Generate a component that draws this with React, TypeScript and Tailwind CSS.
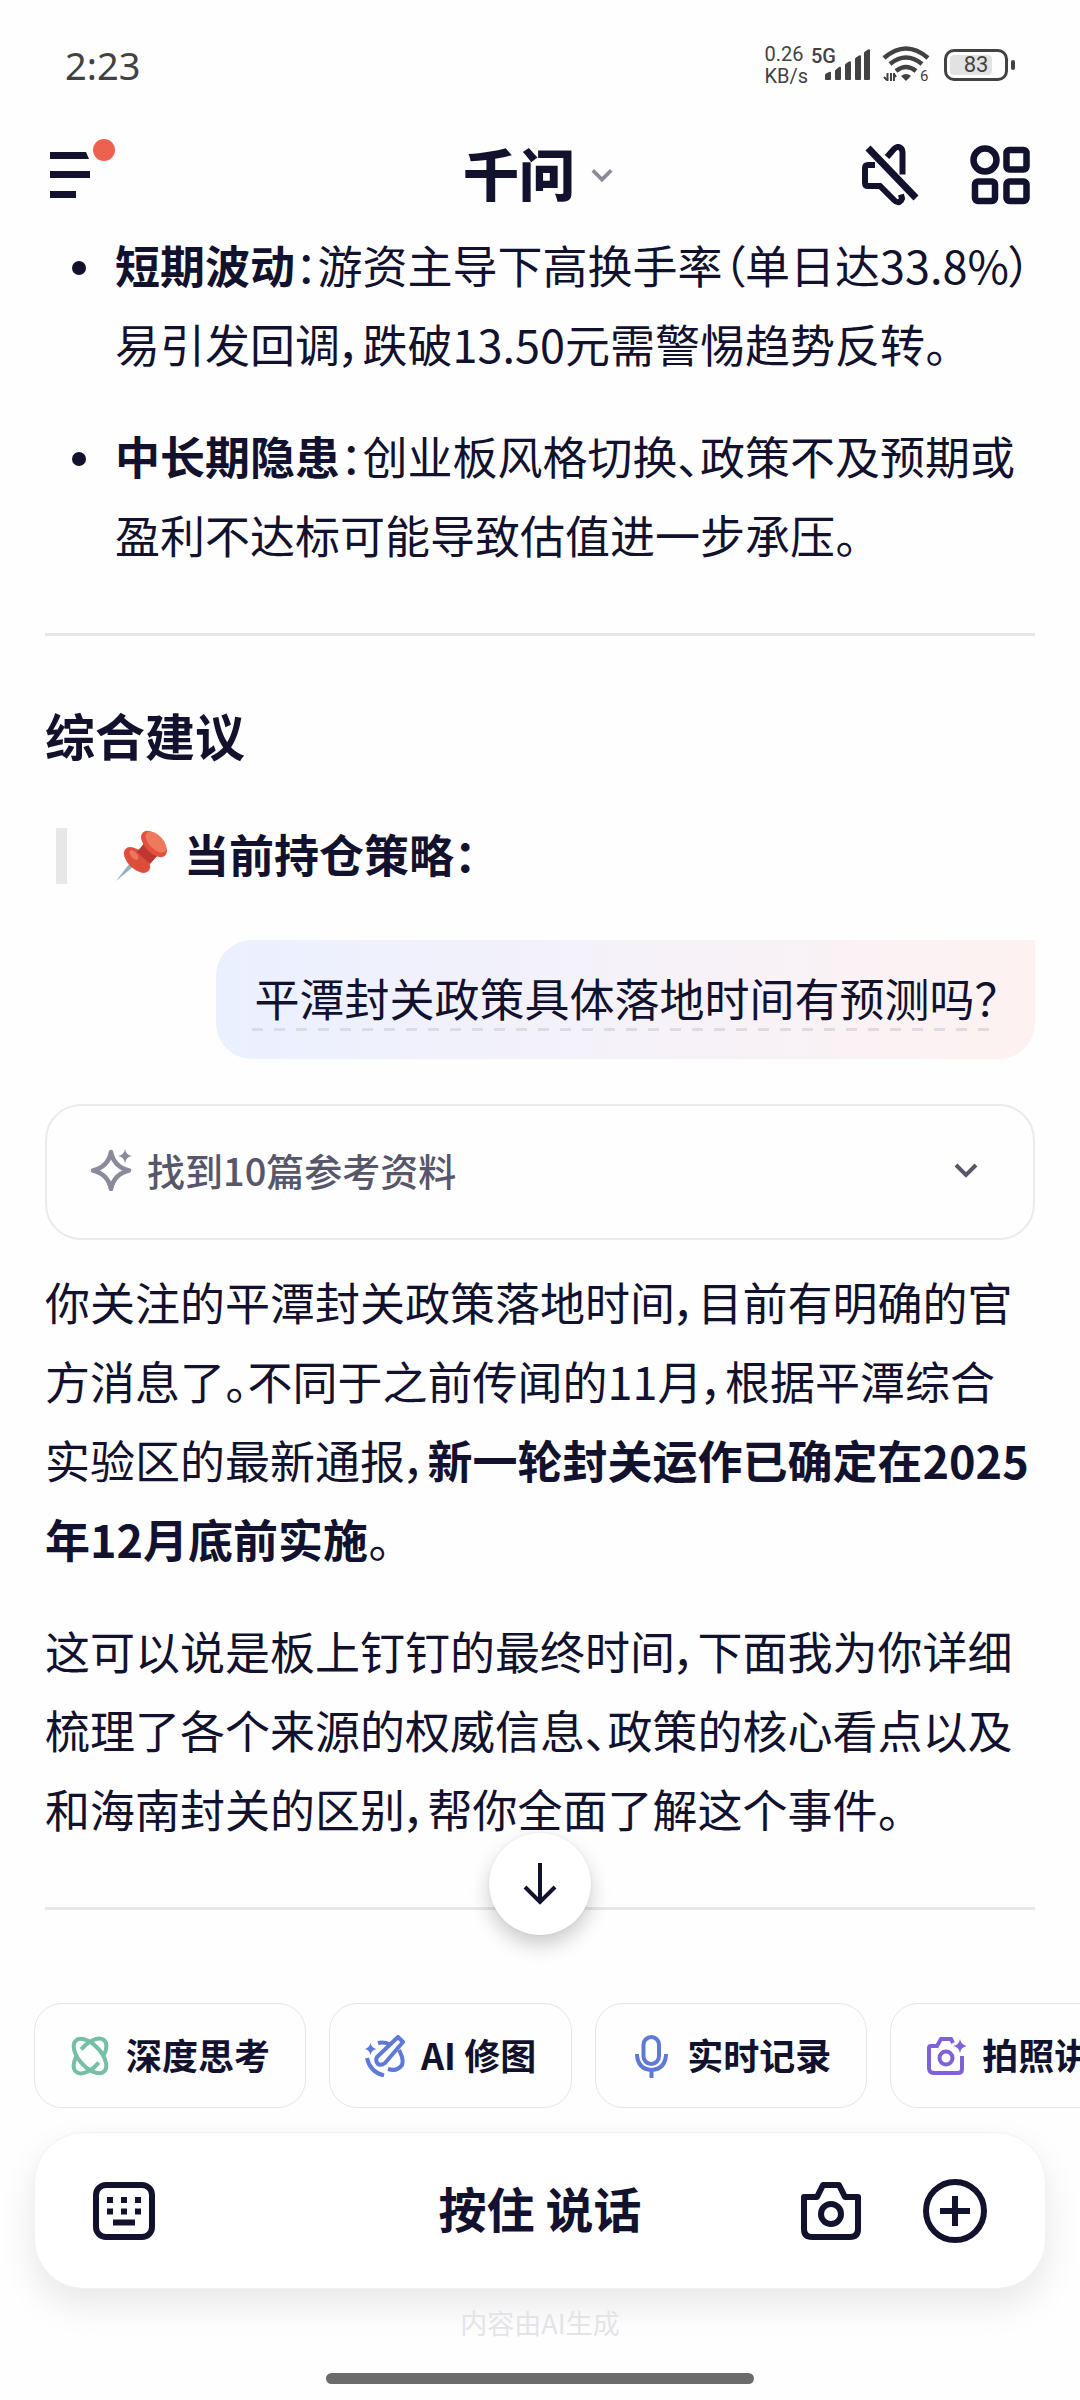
import { ReactNode } from "react";
import clsx from "clsx";

const INK = "#12122e";

const MenuIcon = () => (
  <svg width="66" height="72" viewBox="0 0 66 72" fill={INK}>
    <path d="M0 13h36l3 7H0zM0 32h40v7H0zM0 52h26v7H0z" />
    <circle cx="54" cy="11" r="11" fill="#ec614f" />
  </svg>
);

const MuteIcon = () => (
  <svg width="58" height="62" viewBox="0 0 58 62" fill="none" stroke={INK} strokeWidth="6">
    <path d="M13 21H6Q3 21 3 24v15q0 3 3 3h12l14 14q4 4 7 0.5l1-2-1-4" />
    <path d="M25 13l7-8q3-3 6-1.500 2.500 1.500 2.500 5v22" />
    <path d="M6 4l48 50" strokeWidth="7" />
  </svg>
);

const AppsIcon = () => (
  <svg width="60" height="60" viewBox="0 0 60 60" fill="none" stroke={INK} strokeWidth="6.500">
    <circle cx="15" cy="15" r="11.500" />
    <rect x="36.500" y="5" width="20" height="19.500" rx="3" />
    <rect x="5" y="36.500" width="20" height="19.500" rx="3" />
    <rect x="36.500" y="36.500" width="20" height="19.500" rx="3" />
  </svg>
);

const Chevron = ({ className, width }: { className: string; width: number }) => (
  <svg
    width={width}
    height="16"
    viewBox="0 0 24 16"
    fill="none"
    stroke="currentColor"
    strokeWidth="4"
    className={className}
  >
    <path d="M2 3l10 10L22 3" />
  </svg>
);

const SignalIcon = () => (
  <svg width="46" height="32" viewBox="0 0 46 32" fill="#424242">
    <path d="M1 26q0-1 1-1.500l3-1.500q2-1 2 1v6q0 1-1 1H2q-1 0-1-1zM11 22q0-1 1-1.500l3-2.500q2-1 2 1v11q0 1-1 1h-4q-1 0-1-1zM21 16q0-1 1-1.500l3-2q2-1 2 1v16.500q0 1-1 1h-4q-1 0-1-1zM31 10q0-1 1-1.500l3-2q2-1 2 1V30q0 1-1 1h-4q-1 0-1-1zM40 4q0-1 1-1.500l3-2q2-1 2 1V30q0 1-1 1h-4q-1 0-1-1z" />
  </svg>
);

const WifiIcon = () => (
  <svg width="50" height="42" viewBox="0 -2 50 42" fill="none" stroke="#424242" strokeWidth="4.500">
    <path d="M2 12q22-19 44 0M8 18q16-13 32 0M14 25q10-8 20 0" />
    <path d="M19 30q5-4 10 0l-5 5z" fill="#424242" stroke="none" />
    <path d="M5.500 27v8M9 27v8M12 27v8M2 31l3 3M12 28l2 3" strokeWidth="2" />
    <text x="38" y="35" fill="#424242" stroke="none" fontSize="15" fontFamily="Roboto, sans-serif">
      6
    </text>
  </svg>
);

const PinIcon = () => (
  <svg width="53" height="52" viewBox="0 0 53 52">
    <path d="M1 51l14-18 4 3z" fill="#8fb0bf" />
    <ellipse cx="22" cy="30" rx="16" ry="9" transform="rotate(44 22 30)" fill="#dd4d3c" />
    <path d="M22 22l8-10 14 12-9 10z" fill="#bd3730" />
    <ellipse cx="19" cy="25" rx="6" ry="3" transform="rotate(50 19 25)" fill="#f0755e" />
    <ellipse cx="39" cy="14" rx="16" ry="9" transform="rotate(46 39 14)" fill="#e2503e" />
    <ellipse cx="41" cy="12" rx="13" ry="7" transform="rotate(46 41 12)" fill="#ee7a5d" />
  </svg>
);

const SparkleIcon = () => (
  <svg width="42" height="42" viewBox="0 0 42 42" fill="none" stroke="#8b8a9a" strokeWidth="4.500">
    <path
      d="M20 3q3 15 18 18.500Q23 25 20 40q-3-15-18-18.500Q17 18 20 3z"
      strokeLinejoin="round"
    />
    <path d="M34 0q1 6 7 7-6 1-7 7-1-6-7-7 6-1 7-7z" fill="#8b8a9a" stroke="none" />
  </svg>
);

const AtomIcon = () => (
  <svg width="40" height="40" viewBox="-20 -20 40 40" fill="none" stroke="#74bfa5" strokeWidth="4">
    <ellipse rx="21" ry="11" transform="rotate(48)" />
    <g transform="rotate(-48)">
      <path d="M-1-11A21 11 0 0 1 10 9.700M1 11A21 11 0 0 1-10-9.700" />
    </g>
  </svg>
);

const RetouchIcon = () => (
  <svg width="40" height="42" viewBox="0 0 40 42" fill="none" stroke="#5f79d8" strokeWidth="4">
    <path d="M5.500 8q1 5 6 6-5 1-6 6-1-5-6-6 5-1 6-6z" fill="#5f79d8" stroke="none" />
    <path d="M13 8q6-1.500 12 1.500M2 23q3 14 17 17.500M34 15q5 9 3 15-5 7-14 4" />
    <path d="M33 2l5 5-18 21q-4 3-7 1-3-3-1-7z" strokeLinejoin="round" />
  </svg>
);

const MicIcon = () => (
  <svg width="40" height="44" viewBox="0 0 40 44" fill="none" stroke="#5f7ad6" strokeWidth="4">
    <rect x="12.500" y="3" width="15.500" height="27" rx="7.750" />
    <path d="M6 20v1q1 14 14.500 15Q34 35 35 21v-1M20.500 36v8" />
  </svg>
);

const CameraStarIcon = () => (
  <svg width="40" height="40" viewBox="0 0 40 40" fill="none" stroke="#7f62d6" strokeWidth="4">
    <path d="M27 7l-2-4H15l-4 7H5q-2 0-2 2v20q0 5 5 5h24q4 0 4-4V20" />
    <circle cx="20" cy="22" r="6.500" />
    <path d="M34 3q1 6 7 7-6 1-7 7-1-6-7-7 6-1 7-7z" fill="#7f62d6" stroke="none" />
  </svg>
);

const KeyboardIcon = () => (
  <svg width="62" height="58" viewBox="0 0 62 58" fill="none" stroke={INK} strokeWidth="6">
    <rect x="3" y="3" width="56" height="52" rx="10" />
    <path d="M14 18h6M28 18h6M42 18h6M14 29.500h6M28 29.500h6M42 29.500h6M20 40.500h22" />
  </svg>
);

const CameraIcon = () => (
  <svg width="60" height="58" viewBox="0 0 60 58" fill="none" stroke={INK} strokeWidth="6">
    <path
      d="M3 15h13l6-12h16l6 12h13v32q0 8-8 8H11q-8 0-8-8z"
      strokeLinejoin="round"
    />
    <circle cx="30" cy="32" r="10" />
  </svg>
);

const PlusIcon = () => (
  <svg width="64" height="64" viewBox="0 0 64 64" fill="none" stroke={INK} strokeWidth="6">
    <circle cx="32" cy="32" r="29" />
    <path d="M17 32h30M32 17v30" />
  </svg>
);

const risks = [
  {
    title: "短期波动",
    lines: ["游资主导下高换手率（单日达33.8%）", "易引发回调，跌破13.50元需警惕趋势反转。"],
  },
  {
    title: "中长期隐患",
    lines: ["创业板风格切换、政策不及预期或", "盈利不达标可能导致估值进一步承压。"],
  },
];

const chips: { label: string; icon: ReactNode }[] = [
  { label: "深度思考", icon: <AtomIcon /> },
  { label: "AI 修图", icon: <RetouchIcon /> },
  { label: "实时记录", icon: <MicIcon /> },
  { label: "拍照讲题", icon: <CameraStarIcon /> },
];

const StatusBar = () => (
  <div className="flex h-[130px] items-center justify-between px-[65px] font-['Roboto',sans-serif] text-[#424242]">
    <span className="font-['Noto_Sans',sans-serif] text-[38px] leading-none">2:23</span>
    <div className="flex h-9 items-center">
      <div className="text-[20px] leading-[22px]">
        <div>0.26</div>
        <div>KB/s</div>
      </div>
      <span className="-mr-3 ml-[3px] self-start text-[20px] leading-[18px] font-medium">5G</span>
      <SignalIcon />
      <div className="mr-3 ml-3">
        <WifiIcon />
      </div>
      <div className="relative flex h-8 w-16 items-center justify-center rounded-[10px] border-3 border-[#424242]">
        <div className="absolute inset-y-[3px] left-[3px] w-[42px] rounded-[4px] bg-[#e2e2e2]" />
        <span className="relative text-[22px] leading-none">83</span>
      </div>
      <div className="ml-[3px] h-[10px] w-1 rounded-sm bg-[#424242]" />
    </div>
  </div>
);

const Header = () => (
  <header className="grid h-[90px] grid-cols-3 items-center px-[50px]">
    <button aria-label="菜单" className="justify-self-start">
      <MenuIcon />
    </button>
    <button className="flex items-center gap-4 justify-self-center pr-1">
      <h1 className="pb-[6px] text-[56px] leading-none font-black">千问</h1>
      <Chevron width={22} className="text-[#8b8a9a]" />
    </button>
    <div className="flex items-center gap-[50px] justify-self-end">
      <button aria-label="静音">
        <MuteIcon />
      </button>
      <button aria-label="应用">
        <AppsIcon />
      </button>
    </div>
  </header>
);

const Answer = () => (
  <main className="flex-1 px-[45px] pt-[5px] text-[45px] leading-[79px]">
    <ul className="flex flex-col gap-[33px]">
      {risks.map((risk) => (
        <li key={risk.title} className="flex gap-[29px] pl-[27px]">
          <span className="mt-9 size-[14px] shrink-0 rounded-full bg-[#12122e]" />
          <p className="whitespace-nowrap">
            <strong>{risk.title}</strong>：{risk.lines[0]}
            <br />
            {risk.lines[1]}
          </p>
        </li>
      ))}
    </ul>

    <hr className="mt-[59px] border-t-3 border-[#e7e7e9]" />
    <h2 className="mt-[58px] text-[50px] leading-[80px] font-bold">综合建议</h2>

    <blockquote className="mt-[54px] ml-[11px] flex h-14 items-center border-l-[11px] border-[#e7e7e9] pl-12 leading-[52px] font-bold">
      <PinIcon />
      <span className="ml-4 pb-1">当前持仓策略：</span>
    </blockquote>

    <div className="mt-14 ml-auto w-fit rounded-[36px] rounded-tr-none bg-linear-to-r from-[#ebf0ff] via-[#f5f2f9] to-[#fef2f1] px-9 py-7">
      <p className="px-[2px] leading-[60px]">平潭封关政策具体落地时间有预测吗？</p>
      <div className="h-[3px] bg-[repeating-linear-gradient(90deg,#dcdbe3_0_11px,transparent_11px_22px)]" />
    </div>

    <button className="mt-[45px] flex w-full items-center rounded-[36px] border-2 border-[#ebebed] pt-[38px] pr-[54px] pb-[42px] pl-11 text-[38px] leading-[52px] font-medium text-[#57566b]">
      <SparkleIcon />
      <span className="ml-[14px]">找到10篇参考资料</span>
      <Chevron width={26} className="ml-auto" />
    </button>

    <div className="mt-[22px] flex flex-col gap-[33px] whitespace-nowrap">
      <p>
        你关注的平潭封关政策落地时间，目前有明确的官
        <br />
        方消息了。不同于之前传闻的11月，根据平潭综合
        <br />
        实验区的最新通报，
        <strong>
          新一轮封关运作已确定在2025
          <br />
          年12月底前实施
        </strong>
        。
      </p>
      <p>
        这可以说是板上钉钉的最终时间，下面我为你详细
        <br />
        梳理了各个来源的权威信息、政策的核心看点以及
        <br />
        和海南封关的区别，帮你全面了解这个事件。
      </p>
    </div>

    <hr className="mt-[59px] border-t-3 border-[#e7e7e9]" />
  </main>
);

const Dock = () => (
  <footer className="relative">
    <button
      aria-label="回到底部"
      className="absolute -top-[170px] left-1/2 flex size-[102px] -translate-x-1/2 items-center justify-center rounded-full bg-white shadow-[0_10px_20px_rgba(0,0,0,0.2),0_0_3px_rgba(0,0,0,0.08)]"
    >
      <svg width="34" height="42" viewBox="0 0 34 42" fill="none" stroke={INK} strokeWidth="4">
        <path d="M17 0v38M2 24l15 15 15-15" />
      </svg>
    </button>

    <div className="flex gap-[23px] overflow-hidden pl-[34px]">
      {chips.map((chip) => (
        <button
          key={chip.label}
          className="flex h-[105px] shrink-0 items-center gap-4 rounded-[28px] border border-[#e5e5e8] px-[35px] text-[36px] font-bold"
        >
          {chip.icon}
          <span className="pb-1">{chip.label}</span>
        </button>
      ))}
    </div>

    <div
      className={clsx(
        "mx-[34px] mt-6 grid h-[157px] grid-cols-[1fr_auto_1fr] items-center rounded-[50px] bg-white px-[58px]",
        "border border-[#f2f2f3] shadow-[0_16px_36px_rgba(0,0,0,0.09)]"
      )}
    >
      <button aria-label="键盘" className="justify-self-start">
        <KeyboardIcon />
      </button>
      <button className="pb-2 text-[48px] leading-none font-bold">按住 说话</button>
      <div className="flex items-center gap-[62px] justify-self-end">
        <button aria-label="拍照">
          <CameraIcon />
        </button>
        <button aria-label="更多">
          <PlusIcon />
        </button>
      </div>
    </div>

    <p className="relative mt-4 text-center text-[27px] leading-9 text-[#e4e4e7]">内容由AI生成</p>
    <div className="mx-auto mt-8 mb-4 h-[11px] w-[428px] rounded-full bg-[#6b6b6b]" />
  </footer>
);

const App = () => {
  return (
    <div
      lang="zh-CN"
      className="flex min-h-screen flex-col overflow-hidden bg-[#fefefe] font-['Noto_Sans_CJK_SC',sans-serif] text-[#12122e] [font-feature-settings:'palt']"
    >
      <StatusBar />
      <Header />
      <Answer />
      <Dock />
    </div>
  );
};

export default App;
